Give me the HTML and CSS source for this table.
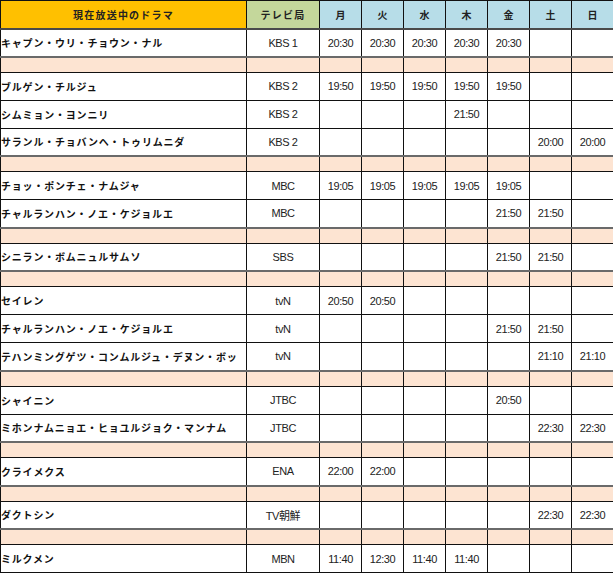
FILE: index.html
```html
<!DOCTYPE html>
<html lang="ja">
<head>
<meta charset="utf-8">
<title>現在放送中のドラマ</title>
<link rel="stylesheet" href="styles.css">
</head>
<body>
<table class="schedule">
  <colgroup>
    <col class="c-title"><col class="c-ch">
    <col class="c-day"><col class="c-day"><col class="c-day"><col class="c-day"><col class="c-day"><col class="c-day"><col class="c-day">
  </colgroup>
  <thead>
    <tr class="head">
      <th class="h-title">現在放送中のドラマ</th>
      <th class="h-ch">テレビ局</th>
      <th class="h-day">月</th><th class="h-day">火</th><th class="h-day">水</th><th class="h-day">木</th><th class="h-day">金</th><th class="h-day">土</th><th class="h-day">日</th>
    </tr>
  </thead>
  <tbody>
    <tr class="row"><td class="name">キャプン・ウリ・チョウン・ナル</td><td class="ch">KBS 1</td><td class="t">20:30</td><td class="t">20:30</td><td class="t">20:30</td><td class="t">20:30</td><td class="t">20:30</td><td class="t"></td><td class="t"></td></tr>
    <tr class="sep"><td></td><td></td><td></td><td></td><td></td><td></td><td></td><td></td><td></td></tr>
    <tr class="row"><td class="name">ブルゲン・チルジュ</td><td class="ch">KBS 2</td><td class="t">19:50</td><td class="t">19:50</td><td class="t">19:50</td><td class="t">19:50</td><td class="t">19:50</td><td class="t"></td><td class="t"></td></tr>
    <tr class="row"><td class="name">シムミョン・ヨンニリ</td><td class="ch">KBS 2</td><td class="t"></td><td class="t"></td><td class="t"></td><td class="t">21:50</td><td class="t"></td><td class="t"></td><td class="t"></td></tr>
    <tr class="row"><td class="name">サランル・チョバンヘ・トゥリムニダ</td><td class="ch">KBS 2</td><td class="t"></td><td class="t"></td><td class="t"></td><td class="t"></td><td class="t"></td><td class="t">20:00</td><td class="t">20:00</td></tr>
    <tr class="sep"><td></td><td></td><td></td><td></td><td></td><td></td><td></td><td></td><td></td></tr>
    <tr class="row"><td class="name">チョッ・ポンチェ・ナムジャ</td><td class="ch">MBC</td><td class="t">19:05</td><td class="t">19:05</td><td class="t">19:05</td><td class="t">19:05</td><td class="t">19:05</td><td class="t"></td><td class="t"></td></tr>
    <tr class="row"><td class="name">チャルランハン・ノエ・ケジョルエ</td><td class="ch">MBC</td><td class="t"></td><td class="t"></td><td class="t"></td><td class="t"></td><td class="t">21:50</td><td class="t">21:50</td><td class="t"></td></tr>
    <tr class="sep"><td></td><td></td><td></td><td></td><td></td><td></td><td></td><td></td><td></td></tr>
    <tr class="row"><td class="name">シニラン・ボムニュルサムソ</td><td class="ch">SBS</td><td class="t"></td><td class="t"></td><td class="t"></td><td class="t"></td><td class="t">21:50</td><td class="t">21:50</td><td class="t"></td></tr>
    <tr class="sep"><td></td><td></td><td></td><td></td><td></td><td></td><td></td><td></td><td></td></tr>
    <tr class="row"><td class="name">セイレン</td><td class="ch">tvN</td><td class="t">20:50</td><td class="t">20:50</td><td class="t"></td><td class="t"></td><td class="t"></td><td class="t"></td><td class="t"></td></tr>
    <tr class="row"><td class="name">チャルランハン・ノエ・ケジョルエ</td><td class="ch">tvN</td><td class="t"></td><td class="t"></td><td class="t"></td><td class="t"></td><td class="t">21:50</td><td class="t">21:50</td><td class="t"></td></tr>
    <tr class="row"><td class="name">テハンミングゲツ・コンムルジュ・デヌン・ボッ</td><td class="ch">tvN</td><td class="t"></td><td class="t"></td><td class="t"></td><td class="t"></td><td class="t"></td><td class="t">21:10</td><td class="t">21:10</td></tr>
    <tr class="sep"><td></td><td></td><td></td><td></td><td></td><td></td><td></td><td></td><td></td></tr>
    <tr class="row"><td class="name">シャイニン</td><td class="ch">JTBC</td><td class="t"></td><td class="t"></td><td class="t"></td><td class="t"></td><td class="t">20:50</td><td class="t"></td><td class="t"></td></tr>
    <tr class="row"><td class="name">ミホンナムニョエ・ヒョユルジョク・マンナム</td><td class="ch">JTBC</td><td class="t"></td><td class="t"></td><td class="t"></td><td class="t"></td><td class="t"></td><td class="t">22:30</td><td class="t">22:30</td></tr>
    <tr class="sep"><td></td><td></td><td></td><td></td><td></td><td></td><td></td><td></td><td></td></tr>
    <tr class="row"><td class="name">クライメクス</td><td class="ch">ENA</td><td class="t">22:00</td><td class="t">22:00</td><td class="t"></td><td class="t"></td><td class="t"></td><td class="t"></td><td class="t"></td></tr>
    <tr class="sep"><td></td><td></td><td></td><td></td><td></td><td></td><td></td><td></td><td></td></tr>
    <tr class="row"><td class="name">ダクトシン</td><td class="ch">TV朝鮮</td><td class="t"></td><td class="t"></td><td class="t"></td><td class="t"></td><td class="t"></td><td class="t">22:30</td><td class="t">22:30</td></tr>
    <tr class="sep"><td></td><td></td><td></td><td></td><td></td><td></td><td></td><td></td><td></td></tr>
    <tr class="row"><td class="name">ミルクメン</td><td class="ch">MBN</td><td class="t">11:40</td><td class="t">12:30</td><td class="t">11:40</td><td class="t">11:40</td><td class="t"></td><td class="t"></td><td class="t"></td></tr>
  </tbody>
</table>
</body>
</html>
```

FILE: styles.css
```css
html, body {
  margin: 0;
  padding: 0;
  background: #ffffff;
}

.schedule {
  border-collapse: collapse;
  table-layout: fixed;
  width: 613px;
  font-family: "Liberation Sans", "Noto Sans CJK JP", sans-serif;
  color: #1a1a1a;
}

.c-title { width: 246px; }
.c-ch { width: 73px; }
.c-day { width: 42px; }

.schedule th,
.schedule td {
  border: 1px solid #111;
  padding: 0;
  white-space: nowrap;
  overflow: hidden;
  vertical-align: middle;
}

.head { height: 28px; }
.head th {
  border-bottom: 2px solid #4a4a4a;
  font-family: "Noto Sans CJK JP", sans-serif;
  font-size: 10px;
  font-weight: bold;
  color: #222;
  text-align: center;
}
.h-title {
  background: #ffc000;
  letter-spacing: 1.2px;
  padding-left: 1px;
}
.h-ch {
  background: #c4d79b;
  font-weight: normal;
  font-size: 9px;
  letter-spacing: 1.2px;
  color: #333;
}
.h-day {
  background: #b7dde8;
}

.row { height: 28px; }

.name {
  font-family: "Noto Sans CJK JP", sans-serif;
  font-size: 10px;
  font-weight: bold;
  letter-spacing: 0.8px;
  padding-left: 4px;
  text-align: left;
  color: #111;
}

.ch,
.t {
  font-size: 11px;
  letter-spacing: -0.4px;
  text-align: center;
  color: #222;
}

.sep { height: 15.5px; }
.sep td {
  background: #fde4d2;
  border-top: 2px solid #6a6a6a;
}
```
